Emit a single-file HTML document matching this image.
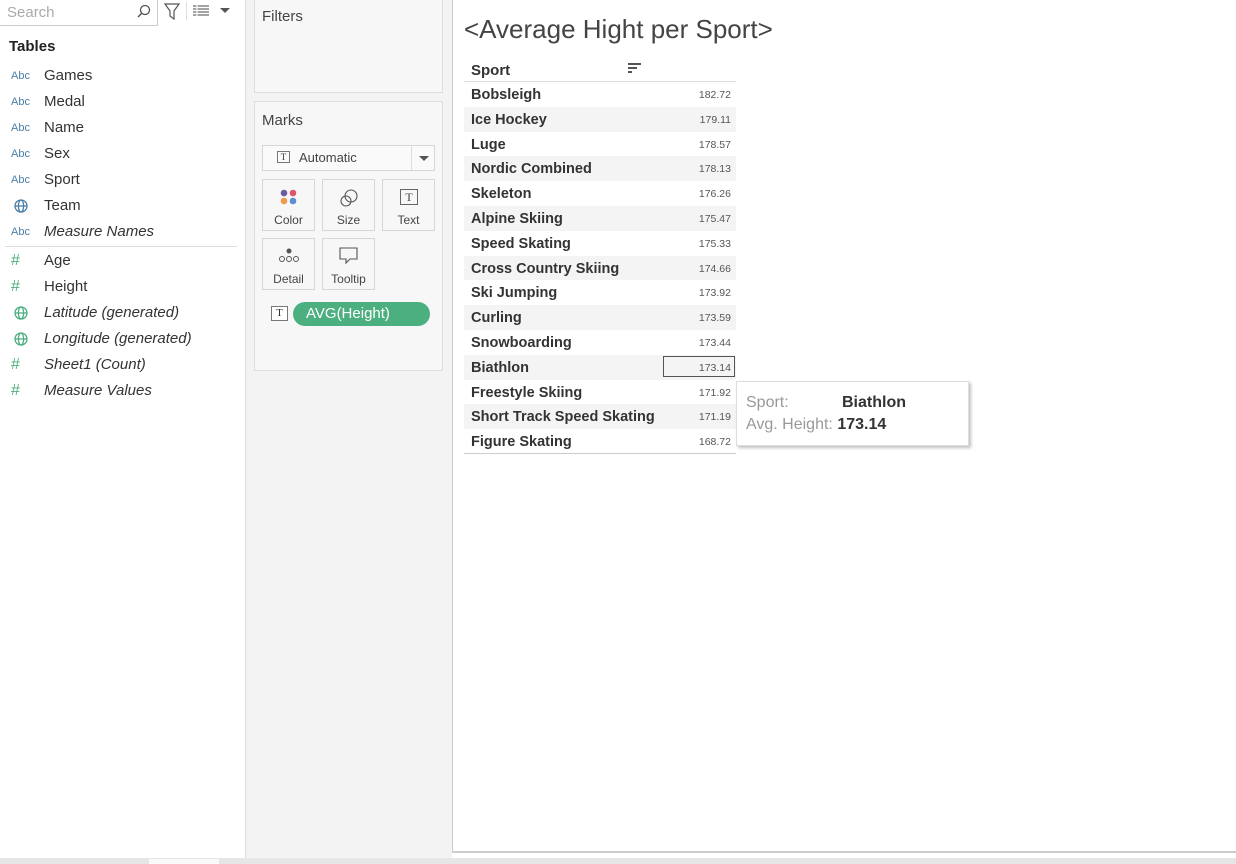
<!DOCTYPE html>
<html><head><meta charset="utf-8"><style>
*{margin:0;padding:0;box-sizing:border-box}
body{width:1236px;height:864px;position:relative;overflow:hidden;background:#fff;font-family:"Liberation Sans",sans-serif;color:#333}
.a{position:absolute}
.f{position:absolute;left:0;height:26px;font-size:15px;line-height:26px;white-space:nowrap}
.f .ic{position:absolute;left:11px;width:24px;font-size:11px;color:#4a7fa8}
.f .t{position:absolute;left:44px}
.f svg{position:absolute;left:14px;top:6px}
.g{color:#4caf7f!important;font-size:16px!important}
.i{font-style:italic}
.r{position:absolute;left:464px;width:272px;height:24.8px;font-size:14.5px;font-weight:bold;color:#333;line-height:26px}
.r .n{position:absolute;left:7px}
.r .v{position:absolute;right:5px;font-size:10.5px;font-weight:normal;color:#555}
.r.s{background:#f4f4f4}
.box{position:absolute;border:1px solid #ddd;background:#f7f7f7}
.btn{position:absolute;width:53px;height:52px;border:1px solid #d6d6d6;background:#f7f7f7;font-size:12px;color:#444;text-align:center}
.btn span{position:absolute;left:0;right:0;bottom:3px}
</style></head><body>
<div class="a" style="left:0;top:0;width:158px;height:26px;border:1px solid #ccc;border-top:none;border-left:none"></div>
<div class="a" style="left:7px;top:4px;font-size:15px;color:#aaa">Search</div>
<svg class="a" style="left:137px;top:4px" width="14" height="15"><circle cx="8" cy="6" r="4.5" fill="none" stroke="#555" stroke-width="1.3"/><line x1="5" y1="9" x2="1" y2="13" stroke="#555" stroke-width="1.5"/></svg>
<svg class="a" style="left:164px;top:3px" width="16" height="17"><path d="M1 1 H15 L10 8 V16 L6 13 V8 Z" fill="none" stroke="#555" stroke-width="1.2"/></svg>
<div class="a" style="left:186px;top:2px;width:1px;height:18px;background:#ddd"></div>
<svg class="a" style="left:193px;top:5px" width="16" height="12"><g stroke="#666" stroke-width="1.2"><line x1="0" y1="1" x2="16" y2="1"/><line x1="0" y1="4" x2="16" y2="4"/><line x1="0" y1="7" x2="16" y2="7"/><line x1="0" y1="10" x2="16" y2="10"/><line x1="4" y1="0" x2="4" y2="11" stroke="#fff"/></g></svg>
<svg class="a" style="left:220px;top:8px" width="10" height="6"><path d="M0 0H10L5 5Z" fill="#555"/></svg>
<div class="a" style="left:9px;top:38px;font-size:15px;font-weight:bold;color:#222">Tables</div>
<div class="f" style="top:63px"><span class="ic">Abc</span><span class="t">Games</span></div>
<div class="f" style="top:89px"><span class="ic">Abc</span><span class="t">Medal</span></div>
<div class="f" style="top:115px"><span class="ic">Abc</span><span class="t">Name</span></div>
<div class="f" style="top:141px"><span class="ic">Abc</span><span class="t">Sex</span></div>
<div class="f" style="top:167px"><span class="ic">Abc</span><span class="t">Sport</span></div>
<div class="f" style="top:193px"><svg width="14" height="14"><g fill="none" stroke="#4a7fa8" stroke-width="1.3"><circle cx="7" cy="7" r="6"/><ellipse cx="7" cy="7" rx="2.6" ry="6"/><line x1="1" y1="7" x2="13" y2="7"/></g></svg><span class="t">Team</span></div>
<div class="f" style="top:219px"><span class="ic">Abc</span><span class="t i">Measure Names</span></div>
<div class="a" style="left:5px;top:246px;width:232px;height:1px;background:#ddd"></div>
<div class="f" style="top:248px"><span class="ic g">#</span><span class="t">Age</span></div>
<div class="f" style="top:274px"><span class="ic g">#</span><span class="t">Height</span></div>
<div class="f" style="top:300px"><svg width="14" height="14"><g fill="none" stroke="#4caf7f" stroke-width="1.3"><circle cx="7" cy="7" r="6"/><ellipse cx="7" cy="7" rx="2.6" ry="6"/><line x1="1" y1="7" x2="13" y2="7"/></g></svg><span class="t i">Latitude (generated)</span></div>
<div class="f" style="top:326px"><svg width="14" height="14"><g fill="none" stroke="#4caf7f" stroke-width="1.3"><circle cx="7" cy="7" r="6"/><ellipse cx="7" cy="7" rx="2.6" ry="6"/><line x1="1" y1="7" x2="13" y2="7"/></g></svg><span class="t i">Longitude (generated)</span></div>
<div class="f" style="top:352px"><span class="ic g">#</span><span class="t i">Sheet1 (Count)</span></div>
<div class="f" style="top:378px"><span class="ic g">#</span><span class="t i">Measure Values</span></div>
<div class="a" style="left:245px;top:0;width:207px;height:858px;background:#f3f3f3;border-left:1px solid #ddd"></div>
<div class="box" style="left:254px;top:-2px;width:189px;height:95px"></div>
<div class="a" style="left:262px;top:8px;font-size:15px;color:#444">Filters</div>
<div class="box" style="left:254px;top:101px;width:189px;height:270px"></div>
<div class="a" style="left:262px;top:112px;font-size:15px;color:#444">Marks</div>
<div class="a" style="left:262px;top:145px;width:173px;height:26px;border:1px solid #d6d6d6;background:#fafafa"></div>
<div class="a" style="left:411px;top:146px;width:1px;height:24px;background:#ddd"></div>
<svg class="a" style="left:419px;top:156px" width="10" height="6"><path d="M0 0H10L5 5Z" fill="#555"/></svg>
<div class="a" style="left:277px;top:151px;width:13px;height:12px;border:1px solid #777;font-size:9px;line-height:10px;text-align:center;font-family:'Liberation Serif',serif">T</div>
<div class="a" style="left:299px;top:150px;font-size:13px;color:#444">Automatic</div>
<div class="btn" style="left:262px;top:179px"><svg class="a" style="left:17px;top:9px" width="18" height="17"><circle cx="4" cy="4" r="3.3" fill="#6c5b9e"/><circle cx="13" cy="4" r="3.3" fill="#e0556b"/><circle cx="4" cy="12" r="3.3" fill="#ef9a4b"/><circle cx="13" cy="12" r="3.3" fill="#5b8fd6"/></svg><span>Color</span></div>
<div class="btn" style="left:322px;top:179px"><svg class="a" style="left:16px;top:8px" width="20" height="20"><circle cx="12" cy="8" r="6" fill="none" stroke="#555" stroke-width="1.1"/><circle cx="7" cy="13" r="5" fill="none" stroke="#555" stroke-width="1.1"/></svg><span>Size</span></div>
<div class="btn" style="left:382px;top:179px"><div class="a" style="left:17px;top:9px;width:18px;height:16px;border:1px solid #666;font-size:12px;line-height:14px;font-family:'Liberation Serif',serif">T</div><span>Text</span></div>
<div class="btn" style="left:262px;top:238px"><svg class="a" style="left:14px;top:9px" width="24" height="16"><circle cx="12" cy="3" r="2.5" fill="#555"/><circle cx="5" cy="11" r="2.5" fill="none" stroke="#555"/><circle cx="12" cy="11" r="2.5" fill="none" stroke="#555"/><circle cx="19" cy="11" r="2.5" fill="none" stroke="#555"/></svg><span>Detail</span></div>
<div class="btn" style="left:322px;top:238px"><svg class="a" style="left:16px;top:8px" width="20" height="18"><path d="M1 1H18V12H11L7 16V12H1Z" fill="none" stroke="#555" stroke-width="1.1"/></svg><span>Tooltip</span></div>
<div class="a" style="left:271px;top:306px;width:17px;height:15px;border:1px solid #777;background:#fff;font-size:11px;line-height:13px;text-align:center;font-family:'Liberation Serif',serif">T</div>
<div class="a" style="left:293px;top:302px;width:137px;height:24px;border-radius:12px;background:#4caf7f;color:#fff;font-size:15px;line-height:24px;padding-left:13px">AVG(Height)</div>
<div class="a" style="left:452px;top:0;width:784px;height:853px;border-left:1px solid #ccc;border-bottom:2px solid #ccc;background:#fff"></div>
<div class="a" style="left:464px;top:14px;font-size:26px;color:#444">&lt;Average Hight per Sport&gt;</div>
<div class="a" style="left:471px;top:62px;font-size:15px;font-weight:bold;color:#333">Sport</div>
<svg class="a" style="left:628px;top:63px" width="14" height="12"><g stroke="#555" stroke-width="2"><line x1="0" y1="1" x2="13" y2="1"/><line x1="0" y1="5" x2="9" y2="5"/><line x1="0" y1="9" x2="4" y2="9"/></g></svg>
<div class="a" style="left:464px;top:81px;width:272px;height:1px;background:#ddd"></div>
<div class="r" style="top:82px"><span class="n">Bobsleigh</span><span class="v">182.72</span></div>
<div class="r s" style="top:106.8px"><span class="n">Ice Hockey</span><span class="v">179.11</span></div>
<div class="r" style="top:131.6px"><span class="n">Luge</span><span class="v">178.57</span></div>
<div class="r s" style="top:156.4px"><span class="n">Nordic Combined</span><span class="v">178.13</span></div>
<div class="r" style="top:181.2px"><span class="n">Skeleton</span><span class="v">176.26</span></div>
<div class="r s" style="top:206px"><span class="n">Alpine Skiing</span><span class="v">175.47</span></div>
<div class="r" style="top:230.8px"><span class="n">Speed Skating</span><span class="v">175.33</span></div>
<div class="r s" style="top:255.6px"><span class="n">Cross Country Skiing</span><span class="v">174.66</span></div>
<div class="r" style="top:280.4px"><span class="n">Ski Jumping</span><span class="v">173.92</span></div>
<div class="r s" style="top:305.2px"><span class="n">Curling</span><span class="v">173.59</span></div>
<div class="r" style="top:330px"><span class="n">Snowboarding</span><span class="v">173.44</span></div>
<div class="r s" style="top:354.8px"><span class="n">Biathlon</span><span class="v">173.14</span></div>
<div class="r" style="top:379.6px"><span class="n">Freestyle Skiing</span><span class="v">171.92</span></div>
<div class="r s" style="top:404.4px"><span class="n">Short Track Speed Skating</span><span class="v">171.19</span></div>
<div class="r" style="top:429.2px"><span class="n">Figure Skating</span><span class="v">168.72</span></div>
<div class="a" style="left:464px;top:453px;width:272px;height:1px;background:#ccc"></div>
<div class="a" style="left:663px;top:356px;width:72px;height:21px;border:1.5px solid #555"></div>
<div class="a" style="left:736px;top:381px;width:233px;height:65px;background:#fff;border:1px solid #ddd;box-shadow:2px 2px 3px rgba(0,0,0,.25)"></div>
<div class="a" style="left:746px;top:394px;font-size:16px;color:#999">Sport:</div>
<div class="a" style="left:842px;top:394px;font-size:16px;font-weight:bold;color:#333">Biathlon</div>
<div class="a" style="left:746px;top:416px;font-size:16px;color:#999">Avg. Height: <b style="color:#333">173.14</b></div>
<div class="a" style="left:0;top:858px;width:1236px;height:6px;background:#e6e6e6"></div>
<div class="a" style="left:149px;top:859px;width:70px;height:5px;background:#fafafa"></div>
</body></html>
